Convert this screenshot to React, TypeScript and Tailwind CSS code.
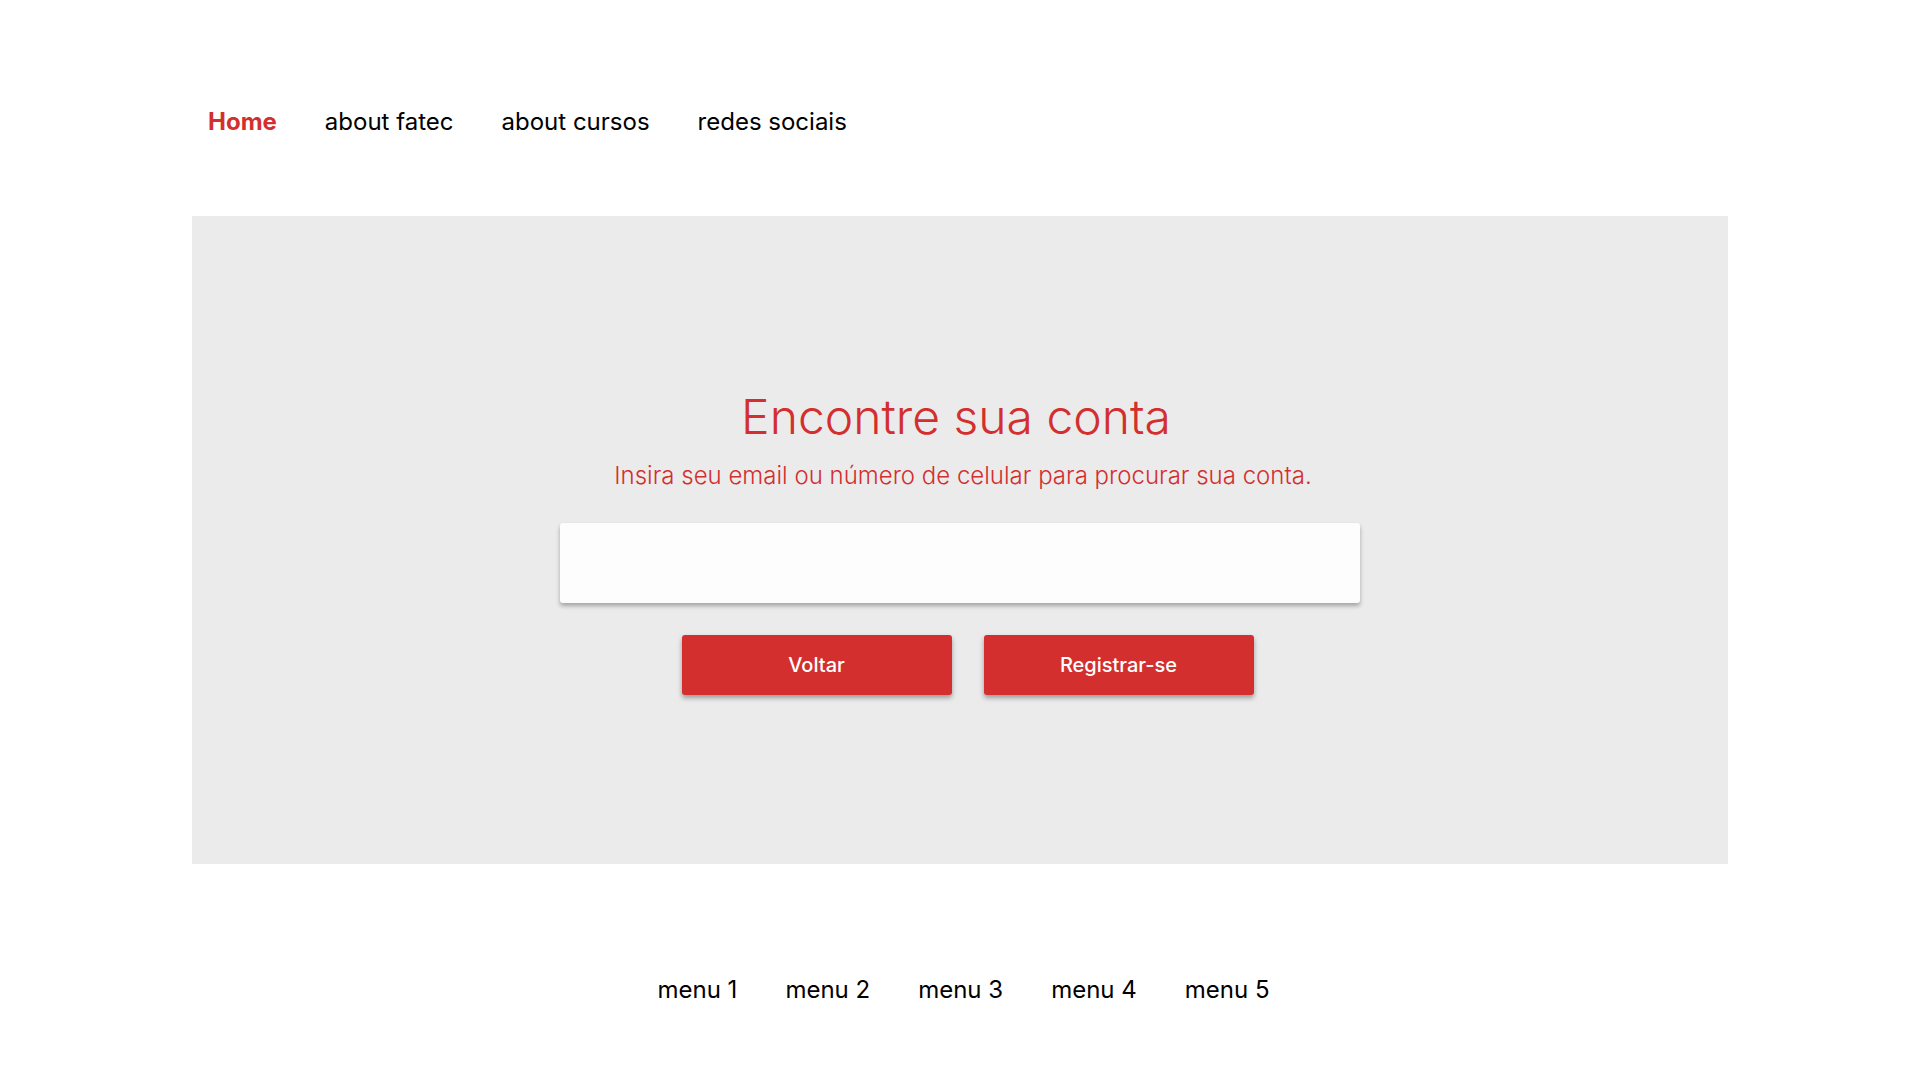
export default function App() {
  const navItems = ['about fatec', 'about cursos', 'redes sociais'];
  const footerItems = ['menu 1', 'menu 2', 'menu 3', 'menu 4', 'menu 5'];

  return (
    <div className="min-h-screen bg-white font-['Inter',sans-serif] text-black">
      {/* header */}
      <nav className="flex items-start gap-12 px-[208px] pt-[106px] h-[216px]">
        <a href="#" className="text-[24px] font-bold text-[#d32f2f] leading-[32px]">
          Home
        </a>
        {navItems.map((item) => (
          <a key={item} href="#" className="text-[24px] leading-[32px]">
            {item}
          </a>
        ))}
      </nav>

      <main className="mx-[192px] h-[648px] pt-[4px] bg-[#ebebeb] flex flex-col items-center justify-center">
        <h1 className="mr-[8px] text-[48px] font-light text-[#d32f2f] leading-[56px]">
          Encontre sua conta
        </h1>
        <p className="mt-[15px] ml-[6px] text-[24px] font-light text-[#d32f2f] leading-[32px]">
          Insira seu email ou número de celular para procurar sua conta.
        </p>
        <input
          type="text"
          className="mt-[31px] w-[800px] h-[80px] bg-[#fefdfe] rounded-[3px] shadow-[0_3px_4px_rgba(0,0,0,0.3)] outline-none px-4 text-[20px]"
        />
        <div className="mt-8 ml-[15px] flex gap-8">
          <button className="w-[270px] h-[60px] bg-[#d32f2f] text-white text-[20px] font-medium rounded-[3px] shadow-[0_3px_5px_rgba(0,0,0,0.35)]">
            Voltar
          </button>
          <button className="w-[270px] h-[60px] bg-[#d32f2f] text-white text-[20px] font-medium rounded-[3px] shadow-[0_3px_5px_rgba(0,0,0,0.35)]">
            Registrar-se
          </button>
        </div>
      </main>

      <footer className="flex justify-center gap-12 pt-[110px] pl-[7px]">
        {footerItems.map((item) => (
          <a key={item} href="#" className="text-[24px] leading-[32px]">
            {item}
          </a>
        ))}
      </footer>
    </div>
  );
}
